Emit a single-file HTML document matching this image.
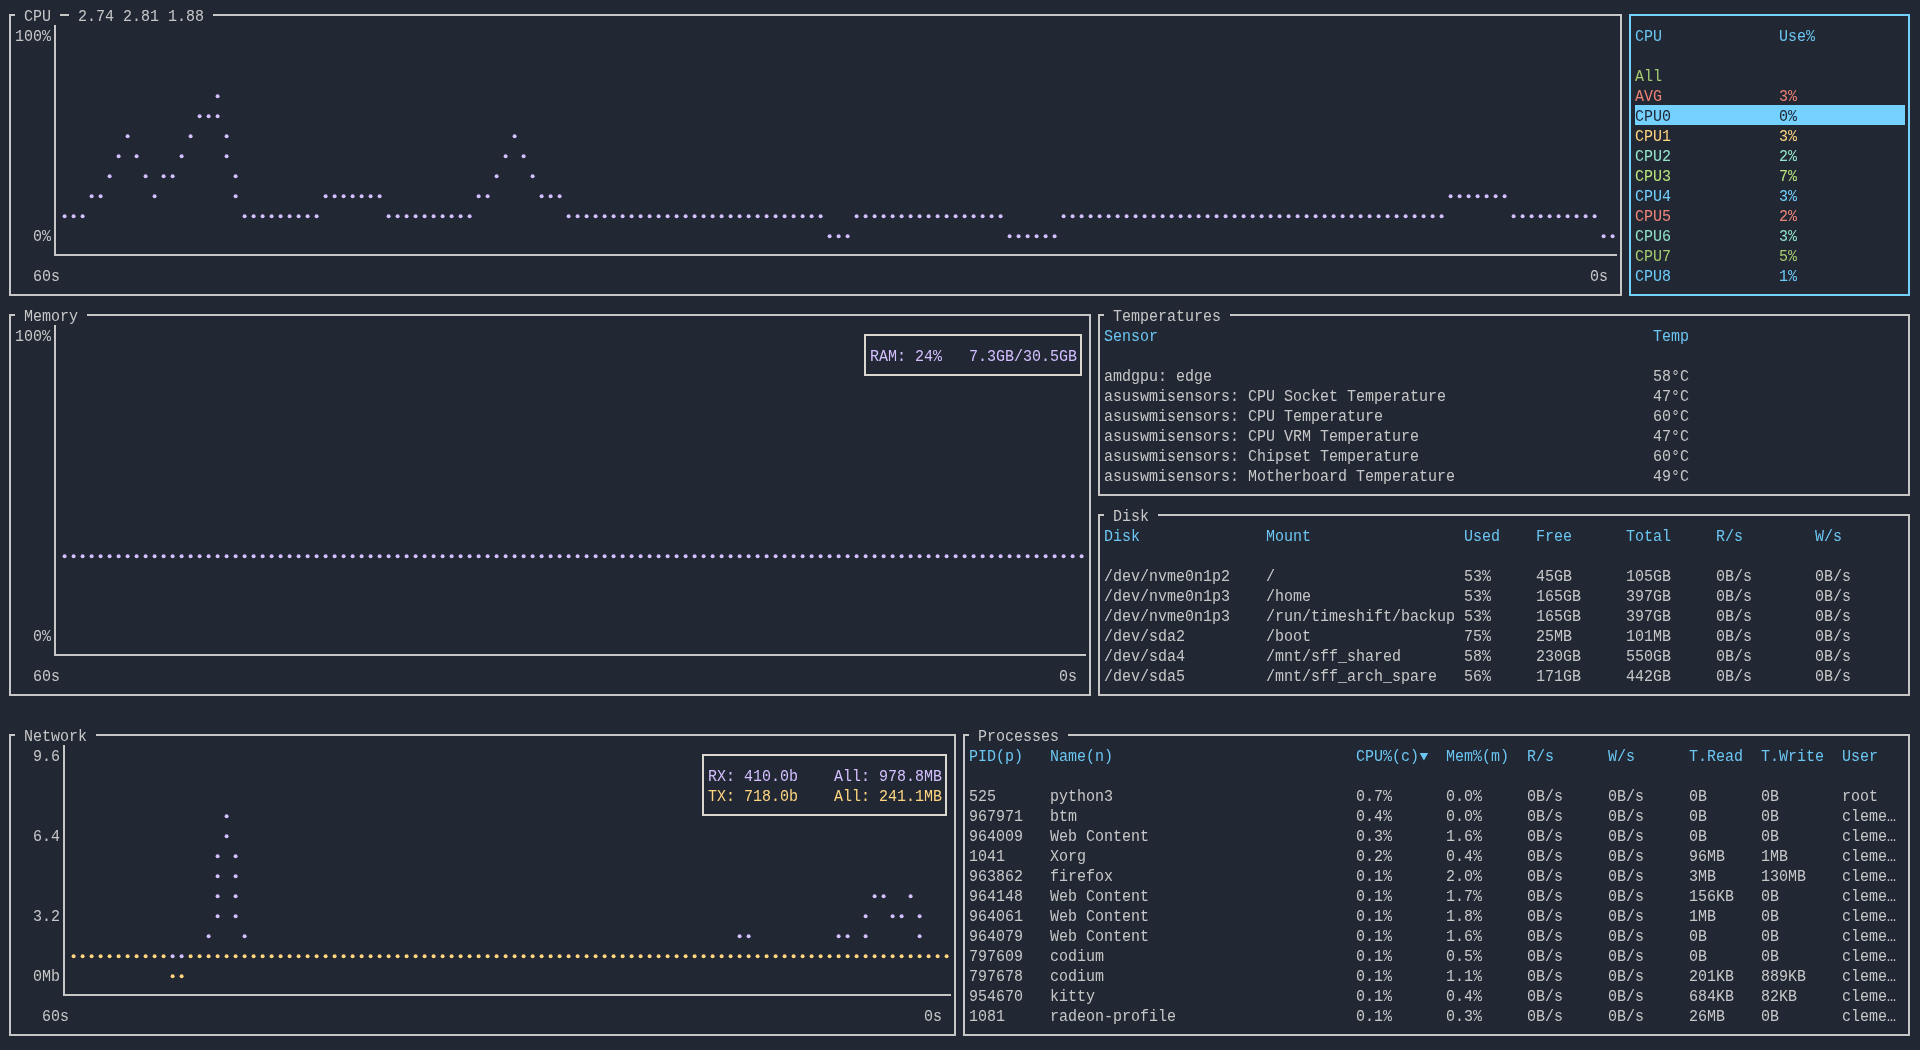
<!DOCTYPE html>
<html><head><meta charset="utf-8"><title>btm</title><style>
html,body{margin:0;padding:0;background:#212733;}
body{width:1920px;height:1050px;overflow:hidden;position:relative;
font-family:"Liberation Mono",monospace;font-size:16px;}
.t{position:absolute;white-space:pre;height:20px;line-height:20px;letter-spacing:0px;transform:scaleX(0.9373);transform-origin:0 0;
font-family:"Liberation Mono",monospace;font-size:16px;}
.l{position:absolute;}
#w{position:absolute;left:0;top:0;width:1920px;height:1050px;will-change:transform;}
</style></head><body><div id="w">
<div class="l" style="left:9px;top:14px;width:2px;height:282px;background:#c7c7c7"></div>
<div class="l" style="left:1620px;top:14px;width:2px;height:282px;background:#c7c7c7"></div>
<div class="l" style="left:9px;top:294px;width:1613px;height:2px;background:#c7c7c7"></div>
<div class="l" style="left:9px;top:14px;width:6px;height:2px;background:#c7c7c7"></div>
<div class="l" style="left:213px;top:14px;width:1409px;height:2px;background:#c7c7c7"></div>
<span class="t" style="left:15px;top:7px;color:#c7c7c7;"> CPU   2.74 2.81 1.88 </span>
<div class="l" style="left:60px;top:14px;width:9px;height:2px;background:#c7c7c7"></div>
<div class="l" style="left:54px;top:25px;width:2px;height:231px;background:#c7c7c7"></div>
<div class="l" style="left:54px;top:254px;width:1563px;height:2px;background:#c7c7c7"></div>
<span class="t" style="left:15px;top:27px;color:#c7c7c7;">100%</span>
<span class="t" style="left:33px;top:227px;color:#c7c7c7;">0%</span>
<span class="t" style="left:33px;top:267px;color:#c7c7c7;">60s</span>
<span class="t" style="left:1590px;top:267px;color:#c7c7c7;">0s</span>
<div class="l" style="left:1629px;top:14px;width:2px;height:282px;background:#73d0ff"></div>
<div class="l" style="left:1908px;top:14px;width:2px;height:282px;background:#73d0ff"></div>
<div class="l" style="left:1629px;top:294px;width:281px;height:2px;background:#73d0ff"></div>
<div class="l" style="left:1629px;top:14px;width:281px;height:2px;background:#73d0ff"></div>
<span class="t" style="left:1635px;top:27px;color:#6cc6f2;">CPU</span>
<span class="t" style="left:1779px;top:27px;color:#6cc6f2;">Use%</span>
<span class="t" style="left:1635px;top:67px;color:#a6cc70;">All</span>
<span class="t" style="left:1635px;top:87px;color:#ed8274;">AVG</span>
<span class="t" style="left:1779px;top:87px;color:#ed8274;">3%</span>
<div class="l" style="left:1635px;top:105px;width:270px;height:20px;background:#73d0ff"></div>
<span class="t" style="left:1635px;top:107px;color:#212733;">CPU0</span>
<span class="t" style="left:1779px;top:107px;color:#212733;">0%</span>
<span class="t" style="left:1635px;top:127px;color:#ffd580;">CPU1</span>
<span class="t" style="left:1779px;top:127px;color:#ffd580;">3%</span>
<span class="t" style="left:1635px;top:147px;color:#95e6cb;">CPU2</span>
<span class="t" style="left:1779px;top:147px;color:#95e6cb;">2%</span>
<span class="t" style="left:1635px;top:167px;color:#bae67e;">CPU3</span>
<span class="t" style="left:1779px;top:167px;color:#bae67e;">7%</span>
<span class="t" style="left:1635px;top:187px;color:#73d0ff;">CPU4</span>
<span class="t" style="left:1779px;top:187px;color:#73d0ff;">3%</span>
<span class="t" style="left:1635px;top:207px;color:#f28779;">CPU5</span>
<span class="t" style="left:1779px;top:207px;color:#f28779;">2%</span>
<span class="t" style="left:1635px;top:227px;color:#90e1c6;">CPU6</span>
<span class="t" style="left:1779px;top:227px;color:#90e1c6;">3%</span>
<span class="t" style="left:1635px;top:247px;color:#a6cc70;">CPU7</span>
<span class="t" style="left:1779px;top:247px;color:#a6cc70;">5%</span>
<span class="t" style="left:1635px;top:267px;color:#6dcbfa;">CPU8</span>
<span class="t" style="left:1779px;top:267px;color:#6dcbfa;">1%</span>
<div class="l" style="left:9px;top:314px;width:2px;height:382px;background:#c7c7c7"></div>
<div class="l" style="left:1089px;top:314px;width:2px;height:382px;background:#c7c7c7"></div>
<div class="l" style="left:9px;top:694px;width:1082px;height:2px;background:#c7c7c7"></div>
<div class="l" style="left:9px;top:314px;width:6px;height:2px;background:#c7c7c7"></div>
<div class="l" style="left:87px;top:314px;width:1004px;height:2px;background:#c7c7c7"></div>
<span class="t" style="left:15px;top:307px;color:#c7c7c7;"> Memory </span>
<div class="l" style="left:54px;top:325px;width:2px;height:331px;background:#c7c7c7"></div>
<div class="l" style="left:54px;top:654px;width:1032px;height:2px;background:#c7c7c7"></div>
<span class="t" style="left:15px;top:327px;color:#c7c7c7;">100%</span>
<span class="t" style="left:33px;top:627px;color:#c7c7c7;">0%</span>
<span class="t" style="left:33px;top:667px;color:#c7c7c7;">60s</span>
<span class="t" style="left:1059px;top:667px;color:#c7c7c7;">0s</span>
<div class="l" style="left:864px;top:334px;width:2px;height:42px;background:#d9d7ce"></div>
<div class="l" style="left:1080px;top:334px;width:2px;height:42px;background:#d9d7ce"></div>
<div class="l" style="left:864px;top:374px;width:218px;height:2px;background:#d9d7ce"></div>
<div class="l" style="left:864px;top:334px;width:218px;height:2px;background:#d9d7ce"></div>
<span class="t" style="left:870px;top:347px;color:#d4bfff;">RAM: 24%   7.3GB/30.5GB</span>
<div class="l" style="left:1098px;top:314px;width:2px;height:182px;background:#c7c7c7"></div>
<div class="l" style="left:1908px;top:314px;width:2px;height:182px;background:#c7c7c7"></div>
<div class="l" style="left:1098px;top:494px;width:812px;height:2px;background:#c7c7c7"></div>
<div class="l" style="left:1098px;top:314px;width:6px;height:2px;background:#c7c7c7"></div>
<div class="l" style="left:1230px;top:314px;width:680px;height:2px;background:#c7c7c7"></div>
<span class="t" style="left:1104px;top:307px;color:#c7c7c7;"> Temperatures </span>
<span class="t" style="left:1104px;top:327px;color:#6cc6f2;">Sensor</span>
<span class="t" style="left:1653px;top:327px;color:#6cc6f2;">Temp</span>
<span class="t" style="left:1104px;top:367px;color:#c7c7c7;">amdgpu: edge</span>
<span class="t" style="left:1653px;top:367px;color:#c7c7c7;">58°C</span>
<span class="t" style="left:1104px;top:387px;color:#c7c7c7;">asuswmisensors: CPU Socket Temperature</span>
<span class="t" style="left:1653px;top:387px;color:#c7c7c7;">47°C</span>
<span class="t" style="left:1104px;top:407px;color:#c7c7c7;">asuswmisensors: CPU Temperature</span>
<span class="t" style="left:1653px;top:407px;color:#c7c7c7;">60°C</span>
<span class="t" style="left:1104px;top:427px;color:#c7c7c7;">asuswmisensors: CPU VRM Temperature</span>
<span class="t" style="left:1653px;top:427px;color:#c7c7c7;">47°C</span>
<span class="t" style="left:1104px;top:447px;color:#c7c7c7;">asuswmisensors: Chipset Temperature</span>
<span class="t" style="left:1653px;top:447px;color:#c7c7c7;">60°C</span>
<span class="t" style="left:1104px;top:467px;color:#c7c7c7;">asuswmisensors: Motherboard Temperature</span>
<span class="t" style="left:1653px;top:467px;color:#c7c7c7;">49°C</span>
<div class="l" style="left:1098px;top:514px;width:2px;height:182px;background:#c7c7c7"></div>
<div class="l" style="left:1908px;top:514px;width:2px;height:182px;background:#c7c7c7"></div>
<div class="l" style="left:1098px;top:694px;width:812px;height:2px;background:#c7c7c7"></div>
<div class="l" style="left:1098px;top:514px;width:6px;height:2px;background:#c7c7c7"></div>
<div class="l" style="left:1158px;top:514px;width:752px;height:2px;background:#c7c7c7"></div>
<span class="t" style="left:1104px;top:507px;color:#c7c7c7;"> Disk </span>
<span class="t" style="left:1104px;top:527px;color:#6cc6f2;">Disk</span>
<span class="t" style="left:1266px;top:527px;color:#6cc6f2;">Mount</span>
<span class="t" style="left:1464px;top:527px;color:#6cc6f2;">Used</span>
<span class="t" style="left:1536px;top:527px;color:#6cc6f2;">Free</span>
<span class="t" style="left:1626px;top:527px;color:#6cc6f2;">Total</span>
<span class="t" style="left:1716px;top:527px;color:#6cc6f2;">R/s</span>
<span class="t" style="left:1815px;top:527px;color:#6cc6f2;">W/s</span>
<span class="t" style="left:1104px;top:567px;color:#c7c7c7;">/dev/nvme0n1p2</span>
<span class="t" style="left:1266px;top:567px;color:#c7c7c7;">/</span>
<span class="t" style="left:1464px;top:567px;color:#c7c7c7;">53%</span>
<span class="t" style="left:1536px;top:567px;color:#c7c7c7;">45GB</span>
<span class="t" style="left:1626px;top:567px;color:#c7c7c7;">105GB</span>
<span class="t" style="left:1716px;top:567px;color:#c7c7c7;">0B/s</span>
<span class="t" style="left:1815px;top:567px;color:#c7c7c7;">0B/s</span>
<span class="t" style="left:1104px;top:587px;color:#c7c7c7;">/dev/nvme0n1p3</span>
<span class="t" style="left:1266px;top:587px;color:#c7c7c7;">/home</span>
<span class="t" style="left:1464px;top:587px;color:#c7c7c7;">53%</span>
<span class="t" style="left:1536px;top:587px;color:#c7c7c7;">165GB</span>
<span class="t" style="left:1626px;top:587px;color:#c7c7c7;">397GB</span>
<span class="t" style="left:1716px;top:587px;color:#c7c7c7;">0B/s</span>
<span class="t" style="left:1815px;top:587px;color:#c7c7c7;">0B/s</span>
<span class="t" style="left:1104px;top:607px;color:#c7c7c7;">/dev/nvme0n1p3</span>
<span class="t" style="left:1266px;top:607px;color:#c7c7c7;">/run/timeshift/backup</span>
<span class="t" style="left:1464px;top:607px;color:#c7c7c7;">53%</span>
<span class="t" style="left:1536px;top:607px;color:#c7c7c7;">165GB</span>
<span class="t" style="left:1626px;top:607px;color:#c7c7c7;">397GB</span>
<span class="t" style="left:1716px;top:607px;color:#c7c7c7;">0B/s</span>
<span class="t" style="left:1815px;top:607px;color:#c7c7c7;">0B/s</span>
<span class="t" style="left:1104px;top:627px;color:#c7c7c7;">/dev/sda2</span>
<span class="t" style="left:1266px;top:627px;color:#c7c7c7;">/boot</span>
<span class="t" style="left:1464px;top:627px;color:#c7c7c7;">75%</span>
<span class="t" style="left:1536px;top:627px;color:#c7c7c7;">25MB</span>
<span class="t" style="left:1626px;top:627px;color:#c7c7c7;">101MB</span>
<span class="t" style="left:1716px;top:627px;color:#c7c7c7;">0B/s</span>
<span class="t" style="left:1815px;top:627px;color:#c7c7c7;">0B/s</span>
<span class="t" style="left:1104px;top:647px;color:#c7c7c7;">/dev/sda4</span>
<span class="t" style="left:1266px;top:647px;color:#c7c7c7;">/mnt/sff_shared</span>
<span class="t" style="left:1464px;top:647px;color:#c7c7c7;">58%</span>
<span class="t" style="left:1536px;top:647px;color:#c7c7c7;">230GB</span>
<span class="t" style="left:1626px;top:647px;color:#c7c7c7;">550GB</span>
<span class="t" style="left:1716px;top:647px;color:#c7c7c7;">0B/s</span>
<span class="t" style="left:1815px;top:647px;color:#c7c7c7;">0B/s</span>
<span class="t" style="left:1104px;top:667px;color:#c7c7c7;">/dev/sda5</span>
<span class="t" style="left:1266px;top:667px;color:#c7c7c7;">/mnt/sff_arch_spare</span>
<span class="t" style="left:1464px;top:667px;color:#c7c7c7;">56%</span>
<span class="t" style="left:1536px;top:667px;color:#c7c7c7;">171GB</span>
<span class="t" style="left:1626px;top:667px;color:#c7c7c7;">442GB</span>
<span class="t" style="left:1716px;top:667px;color:#c7c7c7;">0B/s</span>
<span class="t" style="left:1815px;top:667px;color:#c7c7c7;">0B/s</span>
<div class="l" style="left:9px;top:734px;width:2px;height:302px;background:#c7c7c7"></div>
<div class="l" style="left:954px;top:734px;width:2px;height:302px;background:#c7c7c7"></div>
<div class="l" style="left:9px;top:1034px;width:947px;height:2px;background:#c7c7c7"></div>
<div class="l" style="left:9px;top:734px;width:6px;height:2px;background:#c7c7c7"></div>
<div class="l" style="left:96px;top:734px;width:860px;height:2px;background:#c7c7c7"></div>
<span class="t" style="left:15px;top:727px;color:#c7c7c7;"> Network </span>
<div class="l" style="left:63px;top:745px;width:2px;height:251px;background:#c7c7c7"></div>
<div class="l" style="left:63px;top:994px;width:888px;height:2px;background:#c7c7c7"></div>
<span class="t" style="left:33px;top:747px;color:#c7c7c7;">9.6</span>
<span class="t" style="left:33px;top:827px;color:#c7c7c7;">6.4</span>
<span class="t" style="left:33px;top:907px;color:#c7c7c7;">3.2</span>
<span class="t" style="left:33px;top:967px;color:#c7c7c7;">0Mb</span>
<span class="t" style="left:42px;top:1007px;color:#c7c7c7;">60s</span>
<span class="t" style="left:924px;top:1007px;color:#c7c7c7;">0s</span>
<div class="l" style="left:702px;top:754px;width:2px;height:62px;background:#d9d7ce"></div>
<div class="l" style="left:945px;top:754px;width:2px;height:62px;background:#d9d7ce"></div>
<div class="l" style="left:702px;top:814px;width:245px;height:2px;background:#d9d7ce"></div>
<div class="l" style="left:702px;top:754px;width:245px;height:2px;background:#d9d7ce"></div>
<span class="t" style="left:708px;top:767px;color:#d4bfff;">RX: 410.0b    All: 978.8MB</span>
<span class="t" style="left:708px;top:787px;color:#ffd580;">TX: 718.0b    All: 241.1MB</span>
<div class="l" style="left:963px;top:734px;width:2px;height:302px;background:#c7c7c7"></div>
<div class="l" style="left:1908px;top:734px;width:2px;height:302px;background:#c7c7c7"></div>
<div class="l" style="left:963px;top:1034px;width:947px;height:2px;background:#c7c7c7"></div>
<div class="l" style="left:963px;top:734px;width:6px;height:2px;background:#c7c7c7"></div>
<div class="l" style="left:1068px;top:734px;width:842px;height:2px;background:#c7c7c7"></div>
<span class="t" style="left:969px;top:727px;color:#c7c7c7;"> Processes </span>
<span class="t" style="left:969px;top:747px;color:#6cc6f2;">PID(p)</span>
<span class="t" style="left:1050px;top:747px;color:#6cc6f2;">Name(n)</span>
<span class="t" style="left:1356px;top:747px;color:#6cc6f2;">CPU%(c)</span>
<span class="t" style="left:1446px;top:747px;color:#6cc6f2;">Mem%(m)</span>
<span class="t" style="left:1527px;top:747px;color:#6cc6f2;">R/s</span>
<span class="t" style="left:1608px;top:747px;color:#6cc6f2;">W/s</span>
<span class="t" style="left:1689px;top:747px;color:#6cc6f2;">T.Read</span>
<span class="t" style="left:1761px;top:747px;color:#6cc6f2;">T.Write</span>
<span class="t" style="left:1842px;top:747px;color:#6cc6f2;">User</span>
<svg class="l" style="left:1419px;top:745px" width="11" height="20" viewBox="0 0 11 20"><path d="M0.7 8.1 L9.1 8.1 L4.9 15.5 Z" fill="#6cc6f2"/></svg>
<span class="t" style="left:969px;top:787px;color:#c7c7c7;">525</span>
<span class="t" style="left:1050px;top:787px;color:#c7c7c7;">python3</span>
<span class="t" style="left:1356px;top:787px;color:#c7c7c7;">0.7%</span>
<span class="t" style="left:1446px;top:787px;color:#c7c7c7;">0.0%</span>
<span class="t" style="left:1527px;top:787px;color:#c7c7c7;">0B/s</span>
<span class="t" style="left:1608px;top:787px;color:#c7c7c7;">0B/s</span>
<span class="t" style="left:1689px;top:787px;color:#c7c7c7;">0B</span>
<span class="t" style="left:1761px;top:787px;color:#c7c7c7;">0B</span>
<span class="t" style="left:1842px;top:787px;color:#c7c7c7;">root</span>
<span class="t" style="left:969px;top:807px;color:#c7c7c7;">967971</span>
<span class="t" style="left:1050px;top:807px;color:#c7c7c7;">btm</span>
<span class="t" style="left:1356px;top:807px;color:#c7c7c7;">0.4%</span>
<span class="t" style="left:1446px;top:807px;color:#c7c7c7;">0.0%</span>
<span class="t" style="left:1527px;top:807px;color:#c7c7c7;">0B/s</span>
<span class="t" style="left:1608px;top:807px;color:#c7c7c7;">0B/s</span>
<span class="t" style="left:1689px;top:807px;color:#c7c7c7;">0B</span>
<span class="t" style="left:1761px;top:807px;color:#c7c7c7;">0B</span>
<span class="t" style="left:1842px;top:807px;color:#c7c7c7;">cleme…</span>
<span class="t" style="left:969px;top:827px;color:#c7c7c7;">964009</span>
<span class="t" style="left:1050px;top:827px;color:#c7c7c7;">Web Content</span>
<span class="t" style="left:1356px;top:827px;color:#c7c7c7;">0.3%</span>
<span class="t" style="left:1446px;top:827px;color:#c7c7c7;">1.6%</span>
<span class="t" style="left:1527px;top:827px;color:#c7c7c7;">0B/s</span>
<span class="t" style="left:1608px;top:827px;color:#c7c7c7;">0B/s</span>
<span class="t" style="left:1689px;top:827px;color:#c7c7c7;">0B</span>
<span class="t" style="left:1761px;top:827px;color:#c7c7c7;">0B</span>
<span class="t" style="left:1842px;top:827px;color:#c7c7c7;">cleme…</span>
<span class="t" style="left:969px;top:847px;color:#c7c7c7;">1041</span>
<span class="t" style="left:1050px;top:847px;color:#c7c7c7;">Xorg</span>
<span class="t" style="left:1356px;top:847px;color:#c7c7c7;">0.2%</span>
<span class="t" style="left:1446px;top:847px;color:#c7c7c7;">0.4%</span>
<span class="t" style="left:1527px;top:847px;color:#c7c7c7;">0B/s</span>
<span class="t" style="left:1608px;top:847px;color:#c7c7c7;">0B/s</span>
<span class="t" style="left:1689px;top:847px;color:#c7c7c7;">96MB</span>
<span class="t" style="left:1761px;top:847px;color:#c7c7c7;">1MB</span>
<span class="t" style="left:1842px;top:847px;color:#c7c7c7;">cleme…</span>
<span class="t" style="left:969px;top:867px;color:#c7c7c7;">963862</span>
<span class="t" style="left:1050px;top:867px;color:#c7c7c7;">firefox</span>
<span class="t" style="left:1356px;top:867px;color:#c7c7c7;">0.1%</span>
<span class="t" style="left:1446px;top:867px;color:#c7c7c7;">2.0%</span>
<span class="t" style="left:1527px;top:867px;color:#c7c7c7;">0B/s</span>
<span class="t" style="left:1608px;top:867px;color:#c7c7c7;">0B/s</span>
<span class="t" style="left:1689px;top:867px;color:#c7c7c7;">3MB</span>
<span class="t" style="left:1761px;top:867px;color:#c7c7c7;">130MB</span>
<span class="t" style="left:1842px;top:867px;color:#c7c7c7;">cleme…</span>
<span class="t" style="left:969px;top:887px;color:#c7c7c7;">964148</span>
<span class="t" style="left:1050px;top:887px;color:#c7c7c7;">Web Content</span>
<span class="t" style="left:1356px;top:887px;color:#c7c7c7;">0.1%</span>
<span class="t" style="left:1446px;top:887px;color:#c7c7c7;">1.7%</span>
<span class="t" style="left:1527px;top:887px;color:#c7c7c7;">0B/s</span>
<span class="t" style="left:1608px;top:887px;color:#c7c7c7;">0B/s</span>
<span class="t" style="left:1689px;top:887px;color:#c7c7c7;">156KB</span>
<span class="t" style="left:1761px;top:887px;color:#c7c7c7;">0B</span>
<span class="t" style="left:1842px;top:887px;color:#c7c7c7;">cleme…</span>
<span class="t" style="left:969px;top:907px;color:#c7c7c7;">964061</span>
<span class="t" style="left:1050px;top:907px;color:#c7c7c7;">Web Content</span>
<span class="t" style="left:1356px;top:907px;color:#c7c7c7;">0.1%</span>
<span class="t" style="left:1446px;top:907px;color:#c7c7c7;">1.8%</span>
<span class="t" style="left:1527px;top:907px;color:#c7c7c7;">0B/s</span>
<span class="t" style="left:1608px;top:907px;color:#c7c7c7;">0B/s</span>
<span class="t" style="left:1689px;top:907px;color:#c7c7c7;">1MB</span>
<span class="t" style="left:1761px;top:907px;color:#c7c7c7;">0B</span>
<span class="t" style="left:1842px;top:907px;color:#c7c7c7;">cleme…</span>
<span class="t" style="left:969px;top:927px;color:#c7c7c7;">964079</span>
<span class="t" style="left:1050px;top:927px;color:#c7c7c7;">Web Content</span>
<span class="t" style="left:1356px;top:927px;color:#c7c7c7;">0.1%</span>
<span class="t" style="left:1446px;top:927px;color:#c7c7c7;">1.6%</span>
<span class="t" style="left:1527px;top:927px;color:#c7c7c7;">0B/s</span>
<span class="t" style="left:1608px;top:927px;color:#c7c7c7;">0B/s</span>
<span class="t" style="left:1689px;top:927px;color:#c7c7c7;">0B</span>
<span class="t" style="left:1761px;top:927px;color:#c7c7c7;">0B</span>
<span class="t" style="left:1842px;top:927px;color:#c7c7c7;">cleme…</span>
<span class="t" style="left:969px;top:947px;color:#c7c7c7;">797609</span>
<span class="t" style="left:1050px;top:947px;color:#c7c7c7;">codium</span>
<span class="t" style="left:1356px;top:947px;color:#c7c7c7;">0.1%</span>
<span class="t" style="left:1446px;top:947px;color:#c7c7c7;">0.5%</span>
<span class="t" style="left:1527px;top:947px;color:#c7c7c7;">0B/s</span>
<span class="t" style="left:1608px;top:947px;color:#c7c7c7;">0B/s</span>
<span class="t" style="left:1689px;top:947px;color:#c7c7c7;">0B</span>
<span class="t" style="left:1761px;top:947px;color:#c7c7c7;">0B</span>
<span class="t" style="left:1842px;top:947px;color:#c7c7c7;">cleme…</span>
<span class="t" style="left:969px;top:967px;color:#c7c7c7;">797678</span>
<span class="t" style="left:1050px;top:967px;color:#c7c7c7;">codium</span>
<span class="t" style="left:1356px;top:967px;color:#c7c7c7;">0.1%</span>
<span class="t" style="left:1446px;top:967px;color:#c7c7c7;">1.1%</span>
<span class="t" style="left:1527px;top:967px;color:#c7c7c7;">0B/s</span>
<span class="t" style="left:1608px;top:967px;color:#c7c7c7;">0B/s</span>
<span class="t" style="left:1689px;top:967px;color:#c7c7c7;">201KB</span>
<span class="t" style="left:1761px;top:967px;color:#c7c7c7;">889KB</span>
<span class="t" style="left:1842px;top:967px;color:#c7c7c7;">cleme…</span>
<span class="t" style="left:969px;top:987px;color:#c7c7c7;">954670</span>
<span class="t" style="left:1050px;top:987px;color:#c7c7c7;">kitty</span>
<span class="t" style="left:1356px;top:987px;color:#c7c7c7;">0.1%</span>
<span class="t" style="left:1446px;top:987px;color:#c7c7c7;">0.4%</span>
<span class="t" style="left:1527px;top:987px;color:#c7c7c7;">0B/s</span>
<span class="t" style="left:1608px;top:987px;color:#c7c7c7;">0B/s</span>
<span class="t" style="left:1689px;top:987px;color:#c7c7c7;">684KB</span>
<span class="t" style="left:1761px;top:987px;color:#c7c7c7;">82KB</span>
<span class="t" style="left:1842px;top:987px;color:#c7c7c7;">cleme…</span>
<span class="t" style="left:969px;top:1007px;color:#c7c7c7;">1081</span>
<span class="t" style="left:1050px;top:1007px;color:#c7c7c7;">radeon-profile</span>
<span class="t" style="left:1356px;top:1007px;color:#c7c7c7;">0.1%</span>
<span class="t" style="left:1446px;top:1007px;color:#c7c7c7;">0.3%</span>
<span class="t" style="left:1527px;top:1007px;color:#c7c7c7;">0B/s</span>
<span class="t" style="left:1608px;top:1007px;color:#c7c7c7;">0B/s</span>
<span class="t" style="left:1689px;top:1007px;color:#c7c7c7;">26MB</span>
<span class="t" style="left:1761px;top:1007px;color:#c7c7c7;">0B</span>
<span class="t" style="left:1842px;top:1007px;color:#c7c7c7;">cleme…</span>
<svg class="l" style="left:0;top:0" width="1920" height="1050" viewBox="0 0 1920 1050"><g fill="#d4bfff"><circle cx="217.6" cy="96.15" r="2.0"/><circle cx="199.6" cy="116.15" r="2.0"/><circle cx="208.6" cy="116.15" r="2.0"/><circle cx="217.6" cy="116.15" r="2.0"/><circle cx="127.6" cy="136.15" r="2.0"/><circle cx="190.6" cy="136.15" r="2.0"/><circle cx="226.6" cy="136.15" r="2.0"/><circle cx="514.6" cy="136.15" r="2.0"/><circle cx="118.6" cy="156.15" r="2.0"/><circle cx="136.6" cy="156.15" r="2.0"/><circle cx="181.6" cy="156.15" r="2.0"/><circle cx="226.6" cy="156.15" r="2.0"/><circle cx="505.6" cy="156.15" r="2.0"/><circle cx="523.6" cy="156.15" r="2.0"/><circle cx="109.6" cy="176.15" r="2.0"/><circle cx="145.6" cy="176.15" r="2.0"/><circle cx="163.6" cy="176.15" r="2.0"/><circle cx="172.6" cy="176.15" r="2.0"/><circle cx="235.6" cy="176.15" r="2.0"/><circle cx="496.6" cy="176.15" r="2.0"/><circle cx="532.6" cy="176.15" r="2.0"/><circle cx="91.6" cy="196.15" r="2.0"/><circle cx="100.6" cy="196.15" r="2.0"/><circle cx="154.6" cy="196.15" r="2.0"/><circle cx="235.6" cy="196.15" r="2.0"/><circle cx="325.6" cy="196.15" r="2.0"/><circle cx="334.6" cy="196.15" r="2.0"/><circle cx="343.6" cy="196.15" r="2.0"/><circle cx="352.6" cy="196.15" r="2.0"/><circle cx="361.6" cy="196.15" r="2.0"/><circle cx="370.6" cy="196.15" r="2.0"/><circle cx="379.6" cy="196.15" r="2.0"/><circle cx="478.6" cy="196.15" r="2.0"/><circle cx="487.6" cy="196.15" r="2.0"/><circle cx="541.6" cy="196.15" r="2.0"/><circle cx="550.6" cy="196.15" r="2.0"/><circle cx="559.6" cy="196.15" r="2.0"/><circle cx="1450.6" cy="196.15" r="2.0"/><circle cx="1459.6" cy="196.15" r="2.0"/><circle cx="1468.6" cy="196.15" r="2.0"/><circle cx="1477.6" cy="196.15" r="2.0"/><circle cx="1486.6" cy="196.15" r="2.0"/><circle cx="1495.6" cy="196.15" r="2.0"/><circle cx="1504.6" cy="196.15" r="2.0"/><circle cx="64.6" cy="216.15" r="2.0"/><circle cx="73.6" cy="216.15" r="2.0"/><circle cx="82.6" cy="216.15" r="2.0"/><circle cx="244.6" cy="216.15" r="2.0"/><circle cx="253.6" cy="216.15" r="2.0"/><circle cx="262.6" cy="216.15" r="2.0"/><circle cx="271.6" cy="216.15" r="2.0"/><circle cx="280.6" cy="216.15" r="2.0"/><circle cx="289.6" cy="216.15" r="2.0"/><circle cx="298.6" cy="216.15" r="2.0"/><circle cx="307.6" cy="216.15" r="2.0"/><circle cx="316.6" cy="216.15" r="2.0"/><circle cx="388.6" cy="216.15" r="2.0"/><circle cx="397.6" cy="216.15" r="2.0"/><circle cx="406.6" cy="216.15" r="2.0"/><circle cx="415.6" cy="216.15" r="2.0"/><circle cx="424.6" cy="216.15" r="2.0"/><circle cx="433.6" cy="216.15" r="2.0"/><circle cx="442.6" cy="216.15" r="2.0"/><circle cx="451.6" cy="216.15" r="2.0"/><circle cx="460.6" cy="216.15" r="2.0"/><circle cx="469.6" cy="216.15" r="2.0"/><circle cx="568.6" cy="216.15" r="2.0"/><circle cx="577.6" cy="216.15" r="2.0"/><circle cx="586.6" cy="216.15" r="2.0"/><circle cx="595.6" cy="216.15" r="2.0"/><circle cx="604.6" cy="216.15" r="2.0"/><circle cx="613.6" cy="216.15" r="2.0"/><circle cx="622.6" cy="216.15" r="2.0"/><circle cx="631.6" cy="216.15" r="2.0"/><circle cx="640.6" cy="216.15" r="2.0"/><circle cx="649.6" cy="216.15" r="2.0"/><circle cx="658.6" cy="216.15" r="2.0"/><circle cx="667.6" cy="216.15" r="2.0"/><circle cx="676.6" cy="216.15" r="2.0"/><circle cx="685.6" cy="216.15" r="2.0"/><circle cx="694.6" cy="216.15" r="2.0"/><circle cx="703.6" cy="216.15" r="2.0"/><circle cx="712.6" cy="216.15" r="2.0"/><circle cx="721.6" cy="216.15" r="2.0"/><circle cx="730.6" cy="216.15" r="2.0"/><circle cx="739.6" cy="216.15" r="2.0"/><circle cx="748.6" cy="216.15" r="2.0"/><circle cx="757.6" cy="216.15" r="2.0"/><circle cx="766.6" cy="216.15" r="2.0"/><circle cx="775.6" cy="216.15" r="2.0"/><circle cx="784.6" cy="216.15" r="2.0"/><circle cx="793.6" cy="216.15" r="2.0"/><circle cx="802.6" cy="216.15" r="2.0"/><circle cx="811.6" cy="216.15" r="2.0"/><circle cx="820.6" cy="216.15" r="2.0"/><circle cx="856.6" cy="216.15" r="2.0"/><circle cx="865.6" cy="216.15" r="2.0"/><circle cx="874.6" cy="216.15" r="2.0"/><circle cx="883.6" cy="216.15" r="2.0"/><circle cx="892.6" cy="216.15" r="2.0"/><circle cx="901.6" cy="216.15" r="2.0"/><circle cx="910.6" cy="216.15" r="2.0"/><circle cx="919.6" cy="216.15" r="2.0"/><circle cx="928.6" cy="216.15" r="2.0"/><circle cx="937.6" cy="216.15" r="2.0"/><circle cx="946.6" cy="216.15" r="2.0"/><circle cx="955.6" cy="216.15" r="2.0"/><circle cx="964.6" cy="216.15" r="2.0"/><circle cx="973.6" cy="216.15" r="2.0"/><circle cx="982.6" cy="216.15" r="2.0"/><circle cx="991.6" cy="216.15" r="2.0"/><circle cx="1000.6" cy="216.15" r="2.0"/><circle cx="1063.6" cy="216.15" r="2.0"/><circle cx="1072.6" cy="216.15" r="2.0"/><circle cx="1081.6" cy="216.15" r="2.0"/><circle cx="1090.6" cy="216.15" r="2.0"/><circle cx="1099.6" cy="216.15" r="2.0"/><circle cx="1108.6" cy="216.15" r="2.0"/><circle cx="1117.6" cy="216.15" r="2.0"/><circle cx="1126.6" cy="216.15" r="2.0"/><circle cx="1135.6" cy="216.15" r="2.0"/><circle cx="1144.6" cy="216.15" r="2.0"/><circle cx="1153.6" cy="216.15" r="2.0"/><circle cx="1162.6" cy="216.15" r="2.0"/><circle cx="1171.6" cy="216.15" r="2.0"/><circle cx="1180.6" cy="216.15" r="2.0"/><circle cx="1189.6" cy="216.15" r="2.0"/><circle cx="1198.6" cy="216.15" r="2.0"/><circle cx="1207.6" cy="216.15" r="2.0"/><circle cx="1216.6" cy="216.15" r="2.0"/><circle cx="1225.6" cy="216.15" r="2.0"/><circle cx="1234.6" cy="216.15" r="2.0"/><circle cx="1243.6" cy="216.15" r="2.0"/><circle cx="1252.6" cy="216.15" r="2.0"/><circle cx="1261.6" cy="216.15" r="2.0"/><circle cx="1270.6" cy="216.15" r="2.0"/><circle cx="1279.6" cy="216.15" r="2.0"/><circle cx="1288.6" cy="216.15" r="2.0"/><circle cx="1297.6" cy="216.15" r="2.0"/><circle cx="1306.6" cy="216.15" r="2.0"/><circle cx="1315.6" cy="216.15" r="2.0"/><circle cx="1324.6" cy="216.15" r="2.0"/><circle cx="1333.6" cy="216.15" r="2.0"/><circle cx="1342.6" cy="216.15" r="2.0"/><circle cx="1351.6" cy="216.15" r="2.0"/><circle cx="1360.6" cy="216.15" r="2.0"/><circle cx="1369.6" cy="216.15" r="2.0"/><circle cx="1378.6" cy="216.15" r="2.0"/><circle cx="1387.6" cy="216.15" r="2.0"/><circle cx="1396.6" cy="216.15" r="2.0"/><circle cx="1405.6" cy="216.15" r="2.0"/><circle cx="1414.6" cy="216.15" r="2.0"/><circle cx="1423.6" cy="216.15" r="2.0"/><circle cx="1432.6" cy="216.15" r="2.0"/><circle cx="1441.6" cy="216.15" r="2.0"/><circle cx="1513.6" cy="216.15" r="2.0"/><circle cx="1522.6" cy="216.15" r="2.0"/><circle cx="1531.6" cy="216.15" r="2.0"/><circle cx="1540.6" cy="216.15" r="2.0"/><circle cx="1549.6" cy="216.15" r="2.0"/><circle cx="1558.6" cy="216.15" r="2.0"/><circle cx="1567.6" cy="216.15" r="2.0"/><circle cx="1576.6" cy="216.15" r="2.0"/><circle cx="1585.6" cy="216.15" r="2.0"/><circle cx="1594.6" cy="216.15" r="2.0"/><circle cx="829.6" cy="236.15" r="2.0"/><circle cx="838.6" cy="236.15" r="2.0"/><circle cx="847.6" cy="236.15" r="2.0"/><circle cx="1009.6" cy="236.15" r="2.0"/><circle cx="1018.6" cy="236.15" r="2.0"/><circle cx="1027.6" cy="236.15" r="2.0"/><circle cx="1036.6" cy="236.15" r="2.0"/><circle cx="1045.6" cy="236.15" r="2.0"/><circle cx="1054.6" cy="236.15" r="2.0"/><circle cx="1603.6" cy="236.15" r="2.0"/><circle cx="1612.6" cy="236.15" r="2.0"/><circle cx="64.6" cy="556.15" r="2.0"/><circle cx="73.6" cy="556.15" r="2.0"/><circle cx="82.6" cy="556.15" r="2.0"/><circle cx="91.6" cy="556.15" r="2.0"/><circle cx="100.6" cy="556.15" r="2.0"/><circle cx="109.6" cy="556.15" r="2.0"/><circle cx="118.6" cy="556.15" r="2.0"/><circle cx="127.6" cy="556.15" r="2.0"/><circle cx="136.6" cy="556.15" r="2.0"/><circle cx="145.6" cy="556.15" r="2.0"/><circle cx="154.6" cy="556.15" r="2.0"/><circle cx="163.6" cy="556.15" r="2.0"/><circle cx="172.6" cy="556.15" r="2.0"/><circle cx="181.6" cy="556.15" r="2.0"/><circle cx="190.6" cy="556.15" r="2.0"/><circle cx="199.6" cy="556.15" r="2.0"/><circle cx="208.6" cy="556.15" r="2.0"/><circle cx="217.6" cy="556.15" r="2.0"/><circle cx="226.6" cy="556.15" r="2.0"/><circle cx="235.6" cy="556.15" r="2.0"/><circle cx="244.6" cy="556.15" r="2.0"/><circle cx="253.6" cy="556.15" r="2.0"/><circle cx="262.6" cy="556.15" r="2.0"/><circle cx="271.6" cy="556.15" r="2.0"/><circle cx="280.6" cy="556.15" r="2.0"/><circle cx="289.6" cy="556.15" r="2.0"/><circle cx="298.6" cy="556.15" r="2.0"/><circle cx="307.6" cy="556.15" r="2.0"/><circle cx="316.6" cy="556.15" r="2.0"/><circle cx="325.6" cy="556.15" r="2.0"/><circle cx="334.6" cy="556.15" r="2.0"/><circle cx="343.6" cy="556.15" r="2.0"/><circle cx="352.6" cy="556.15" r="2.0"/><circle cx="361.6" cy="556.15" r="2.0"/><circle cx="370.6" cy="556.15" r="2.0"/><circle cx="379.6" cy="556.15" r="2.0"/><circle cx="388.6" cy="556.15" r="2.0"/><circle cx="397.6" cy="556.15" r="2.0"/><circle cx="406.6" cy="556.15" r="2.0"/><circle cx="415.6" cy="556.15" r="2.0"/><circle cx="424.6" cy="556.15" r="2.0"/><circle cx="433.6" cy="556.15" r="2.0"/><circle cx="442.6" cy="556.15" r="2.0"/><circle cx="451.6" cy="556.15" r="2.0"/><circle cx="460.6" cy="556.15" r="2.0"/><circle cx="469.6" cy="556.15" r="2.0"/><circle cx="478.6" cy="556.15" r="2.0"/><circle cx="487.6" cy="556.15" r="2.0"/><circle cx="496.6" cy="556.15" r="2.0"/><circle cx="505.6" cy="556.15" r="2.0"/><circle cx="514.6" cy="556.15" r="2.0"/><circle cx="523.6" cy="556.15" r="2.0"/><circle cx="532.6" cy="556.15" r="2.0"/><circle cx="541.6" cy="556.15" r="2.0"/><circle cx="550.6" cy="556.15" r="2.0"/><circle cx="559.6" cy="556.15" r="2.0"/><circle cx="568.6" cy="556.15" r="2.0"/><circle cx="577.6" cy="556.15" r="2.0"/><circle cx="586.6" cy="556.15" r="2.0"/><circle cx="595.6" cy="556.15" r="2.0"/><circle cx="604.6" cy="556.15" r="2.0"/><circle cx="613.6" cy="556.15" r="2.0"/><circle cx="622.6" cy="556.15" r="2.0"/><circle cx="631.6" cy="556.15" r="2.0"/><circle cx="640.6" cy="556.15" r="2.0"/><circle cx="649.6" cy="556.15" r="2.0"/><circle cx="658.6" cy="556.15" r="2.0"/><circle cx="667.6" cy="556.15" r="2.0"/><circle cx="676.6" cy="556.15" r="2.0"/><circle cx="685.6" cy="556.15" r="2.0"/><circle cx="694.6" cy="556.15" r="2.0"/><circle cx="703.6" cy="556.15" r="2.0"/><circle cx="712.6" cy="556.15" r="2.0"/><circle cx="721.6" cy="556.15" r="2.0"/><circle cx="730.6" cy="556.15" r="2.0"/><circle cx="739.6" cy="556.15" r="2.0"/><circle cx="748.6" cy="556.15" r="2.0"/><circle cx="757.6" cy="556.15" r="2.0"/><circle cx="766.6" cy="556.15" r="2.0"/><circle cx="775.6" cy="556.15" r="2.0"/><circle cx="784.6" cy="556.15" r="2.0"/><circle cx="793.6" cy="556.15" r="2.0"/><circle cx="802.6" cy="556.15" r="2.0"/><circle cx="811.6" cy="556.15" r="2.0"/><circle cx="820.6" cy="556.15" r="2.0"/><circle cx="829.6" cy="556.15" r="2.0"/><circle cx="838.6" cy="556.15" r="2.0"/><circle cx="847.6" cy="556.15" r="2.0"/><circle cx="856.6" cy="556.15" r="2.0"/><circle cx="865.6" cy="556.15" r="2.0"/><circle cx="874.6" cy="556.15" r="2.0"/><circle cx="883.6" cy="556.15" r="2.0"/><circle cx="892.6" cy="556.15" r="2.0"/><circle cx="901.6" cy="556.15" r="2.0"/><circle cx="910.6" cy="556.15" r="2.0"/><circle cx="919.6" cy="556.15" r="2.0"/><circle cx="928.6" cy="556.15" r="2.0"/><circle cx="937.6" cy="556.15" r="2.0"/><circle cx="946.6" cy="556.15" r="2.0"/><circle cx="955.6" cy="556.15" r="2.0"/><circle cx="964.6" cy="556.15" r="2.0"/><circle cx="973.6" cy="556.15" r="2.0"/><circle cx="982.6" cy="556.15" r="2.0"/><circle cx="991.6" cy="556.15" r="2.0"/><circle cx="1000.6" cy="556.15" r="2.0"/><circle cx="1009.6" cy="556.15" r="2.0"/><circle cx="1018.6" cy="556.15" r="2.0"/><circle cx="1027.6" cy="556.15" r="2.0"/><circle cx="1036.6" cy="556.15" r="2.0"/><circle cx="1045.6" cy="556.15" r="2.0"/><circle cx="1054.6" cy="556.15" r="2.0"/><circle cx="1063.6" cy="556.15" r="2.0"/><circle cx="1072.6" cy="556.15" r="2.0"/><circle cx="1081.6" cy="556.15" r="2.0"/><circle cx="172.6" cy="956.15" r="2.0"/><circle cx="181.6" cy="956.15" r="2.0"/><circle cx="226.6" cy="816.15" r="2.0"/><circle cx="226.6" cy="836.15" r="2.0"/><circle cx="217.6" cy="856.15" r="2.0"/><circle cx="235.6" cy="856.15" r="2.0"/><circle cx="217.6" cy="876.15" r="2.0"/><circle cx="235.6" cy="876.15" r="2.0"/><circle cx="217.6" cy="896.15" r="2.0"/><circle cx="235.6" cy="896.15" r="2.0"/><circle cx="874.6" cy="896.15" r="2.0"/><circle cx="883.6" cy="896.15" r="2.0"/><circle cx="910.6" cy="896.15" r="2.0"/><circle cx="217.6" cy="916.15" r="2.0"/><circle cx="235.6" cy="916.15" r="2.0"/><circle cx="865.6" cy="916.15" r="2.0"/><circle cx="892.6" cy="916.15" r="2.0"/><circle cx="901.6" cy="916.15" r="2.0"/><circle cx="919.6" cy="916.15" r="2.0"/><circle cx="208.6" cy="936.15" r="2.0"/><circle cx="244.6" cy="936.15" r="2.0"/><circle cx="739.6" cy="936.15" r="2.0"/><circle cx="748.6" cy="936.15" r="2.0"/><circle cx="838.6" cy="936.15" r="2.0"/><circle cx="847.6" cy="936.15" r="2.0"/><circle cx="865.6" cy="936.15" r="2.0"/><circle cx="919.6" cy="936.15" r="2.0"/></g><g fill="#ffd580"><circle cx="73.6" cy="956.15" r="2.0"/><circle cx="82.6" cy="956.15" r="2.0"/><circle cx="91.6" cy="956.15" r="2.0"/><circle cx="100.6" cy="956.15" r="2.0"/><circle cx="109.6" cy="956.15" r="2.0"/><circle cx="118.6" cy="956.15" r="2.0"/><circle cx="127.6" cy="956.15" r="2.0"/><circle cx="136.6" cy="956.15" r="2.0"/><circle cx="145.6" cy="956.15" r="2.0"/><circle cx="154.6" cy="956.15" r="2.0"/><circle cx="163.6" cy="956.15" r="2.0"/><circle cx="190.6" cy="956.15" r="2.0"/><circle cx="199.6" cy="956.15" r="2.0"/><circle cx="208.6" cy="956.15" r="2.0"/><circle cx="217.6" cy="956.15" r="2.0"/><circle cx="226.6" cy="956.15" r="2.0"/><circle cx="235.6" cy="956.15" r="2.0"/><circle cx="244.6" cy="956.15" r="2.0"/><circle cx="253.6" cy="956.15" r="2.0"/><circle cx="262.6" cy="956.15" r="2.0"/><circle cx="271.6" cy="956.15" r="2.0"/><circle cx="280.6" cy="956.15" r="2.0"/><circle cx="289.6" cy="956.15" r="2.0"/><circle cx="298.6" cy="956.15" r="2.0"/><circle cx="307.6" cy="956.15" r="2.0"/><circle cx="316.6" cy="956.15" r="2.0"/><circle cx="325.6" cy="956.15" r="2.0"/><circle cx="334.6" cy="956.15" r="2.0"/><circle cx="343.6" cy="956.15" r="2.0"/><circle cx="352.6" cy="956.15" r="2.0"/><circle cx="361.6" cy="956.15" r="2.0"/><circle cx="370.6" cy="956.15" r="2.0"/><circle cx="379.6" cy="956.15" r="2.0"/><circle cx="388.6" cy="956.15" r="2.0"/><circle cx="397.6" cy="956.15" r="2.0"/><circle cx="406.6" cy="956.15" r="2.0"/><circle cx="415.6" cy="956.15" r="2.0"/><circle cx="424.6" cy="956.15" r="2.0"/><circle cx="433.6" cy="956.15" r="2.0"/><circle cx="442.6" cy="956.15" r="2.0"/><circle cx="451.6" cy="956.15" r="2.0"/><circle cx="460.6" cy="956.15" r="2.0"/><circle cx="469.6" cy="956.15" r="2.0"/><circle cx="478.6" cy="956.15" r="2.0"/><circle cx="487.6" cy="956.15" r="2.0"/><circle cx="496.6" cy="956.15" r="2.0"/><circle cx="505.6" cy="956.15" r="2.0"/><circle cx="514.6" cy="956.15" r="2.0"/><circle cx="523.6" cy="956.15" r="2.0"/><circle cx="532.6" cy="956.15" r="2.0"/><circle cx="541.6" cy="956.15" r="2.0"/><circle cx="550.6" cy="956.15" r="2.0"/><circle cx="559.6" cy="956.15" r="2.0"/><circle cx="568.6" cy="956.15" r="2.0"/><circle cx="577.6" cy="956.15" r="2.0"/><circle cx="586.6" cy="956.15" r="2.0"/><circle cx="595.6" cy="956.15" r="2.0"/><circle cx="604.6" cy="956.15" r="2.0"/><circle cx="613.6" cy="956.15" r="2.0"/><circle cx="622.6" cy="956.15" r="2.0"/><circle cx="631.6" cy="956.15" r="2.0"/><circle cx="640.6" cy="956.15" r="2.0"/><circle cx="649.6" cy="956.15" r="2.0"/><circle cx="658.6" cy="956.15" r="2.0"/><circle cx="667.6" cy="956.15" r="2.0"/><circle cx="676.6" cy="956.15" r="2.0"/><circle cx="685.6" cy="956.15" r="2.0"/><circle cx="694.6" cy="956.15" r="2.0"/><circle cx="703.6" cy="956.15" r="2.0"/><circle cx="712.6" cy="956.15" r="2.0"/><circle cx="721.6" cy="956.15" r="2.0"/><circle cx="730.6" cy="956.15" r="2.0"/><circle cx="739.6" cy="956.15" r="2.0"/><circle cx="748.6" cy="956.15" r="2.0"/><circle cx="757.6" cy="956.15" r="2.0"/><circle cx="766.6" cy="956.15" r="2.0"/><circle cx="775.6" cy="956.15" r="2.0"/><circle cx="784.6" cy="956.15" r="2.0"/><circle cx="793.6" cy="956.15" r="2.0"/><circle cx="802.6" cy="956.15" r="2.0"/><circle cx="811.6" cy="956.15" r="2.0"/><circle cx="820.6" cy="956.15" r="2.0"/><circle cx="829.6" cy="956.15" r="2.0"/><circle cx="838.6" cy="956.15" r="2.0"/><circle cx="847.6" cy="956.15" r="2.0"/><circle cx="856.6" cy="956.15" r="2.0"/><circle cx="865.6" cy="956.15" r="2.0"/><circle cx="874.6" cy="956.15" r="2.0"/><circle cx="883.6" cy="956.15" r="2.0"/><circle cx="892.6" cy="956.15" r="2.0"/><circle cx="901.6" cy="956.15" r="2.0"/><circle cx="910.6" cy="956.15" r="2.0"/><circle cx="919.6" cy="956.15" r="2.0"/><circle cx="928.6" cy="956.15" r="2.0"/><circle cx="937.6" cy="956.15" r="2.0"/><circle cx="946.6" cy="956.15" r="2.0"/><circle cx="172.6" cy="976.15" r="2.0"/><circle cx="181.6" cy="976.15" r="2.0"/></g></svg>
</div></body></html>
